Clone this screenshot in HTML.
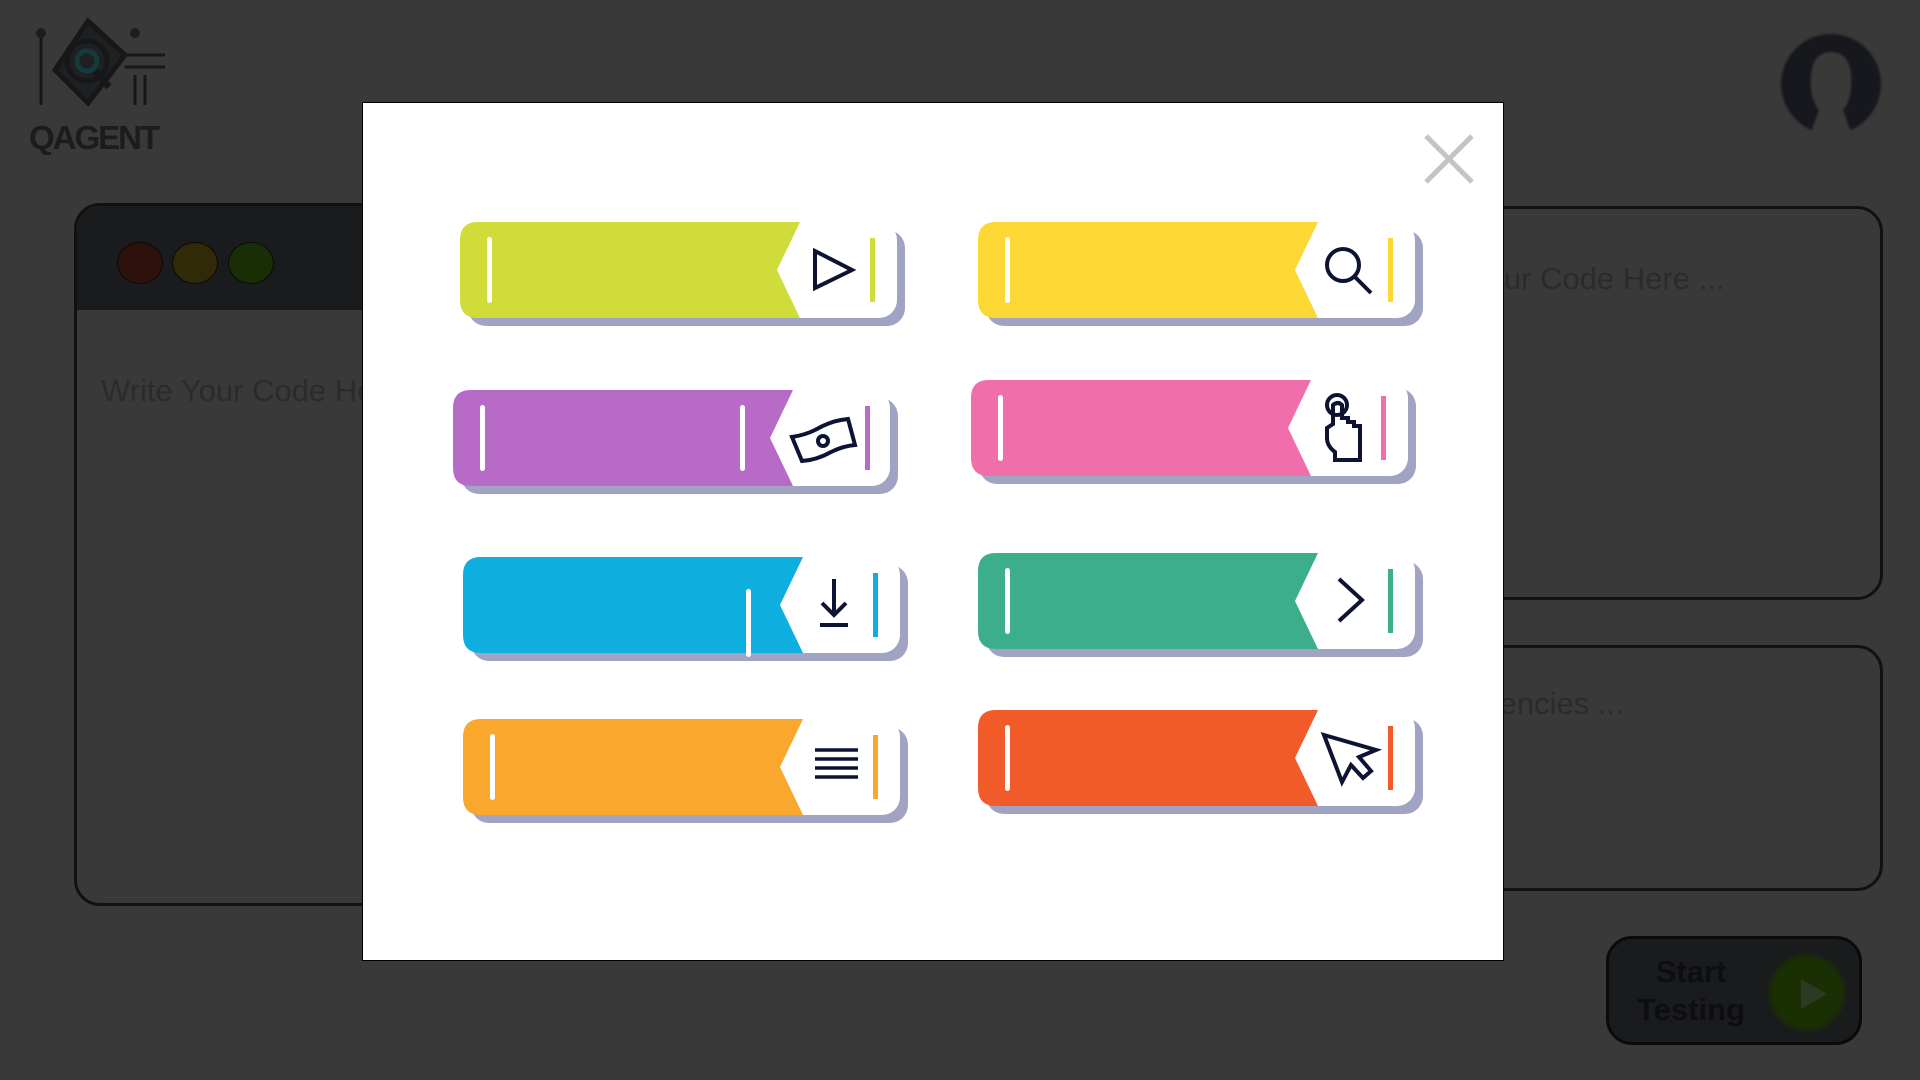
<!DOCTYPE html>
<html><head><meta charset="utf-8"><style>
*{margin:0;padding:0;box-sizing:border-box}
body{width:1920px;height:1080px;background:#393939;position:relative;overflow:hidden;font-family:"Liberation Sans",sans-serif}
.abs{position:absolute}
.panel{position:absolute;border:3px solid #111;border-radius:26px;background:#393939}
.dot{position:absolute;width:46px;height:42px;border-radius:50%;border:1.5px solid #0a0a0a;top:36px}
.ph{position:absolute;font-size:31px;color:#2b2b2b;white-space:nowrap}
.btn{position:absolute}
.ic{fill:none;stroke:#0d1333;stroke-width:4;stroke-linejoin:miter}
</style></head><body>
<!-- logo -->
<svg class="abs" style="left:25px;top:15px" width="145" height="140" viewBox="0 0 145 140">
<g fill="none" stroke="#151718" stroke-width="5">
<path d="M63 6 L100 40 L63 88 L30 55 Z" fill="#1e2022"/>
<circle cx="62" cy="46" r="20"/>
<circle cx="62" cy="46" r="10" stroke="#16393d"/>
<path d="M70 56 L84 72" stroke-width="7"/>
<path d="M100 40 H140 M100 52 H140" stroke-width="3"/>
<path d="M16 20 V90 M110 60 V90 M120 60 V90" stroke-width="3"/>
</g>
<circle cx="16" cy="18" r="5" fill="#1b1d1e"/><circle cx="110" cy="18" r="5" fill="#1b1d1e"/>
<text x="4" y="134" font-family="Liberation Sans" font-weight="bold" font-size="33" fill="#1a1c1d" letter-spacing="-2">QAGENT</text>
</svg>
<!-- avatar -->
<svg class="abs" style="left:1775px;top:30px;filter:blur(1px)" width="112" height="112" viewBox="0 0 112 112">
<circle cx="56" cy="54" r="50" fill="#16181d"/>
<path d="M36 102 L44 80 Q34 68 36 45 Q38 22 56 22 Q74 22 76 45 Q78 68 68 80 L76 102 Q56 112 36 102Z" fill="#393939"/>
</svg>
<!-- left panel -->
<div class="panel" style="left:74px;top:203px;width:840px;height:703px;overflow:hidden">
 <div class="abs" style="left:0;top:0;width:100%;height:104px;background:#1a1b1d"></div>
 <div class="dot" style="left:40px;background:#2e110d"></div>
 <div class="dot" style="left:95px;background:#302a09"></div>
 <div class="dot" style="left:151px;background:#1a2e06"></div>
 <div class="ph" style="left:24px;top:167px">Write Your Code Here ...</div>
</div>
<div class="panel" style="left:1300px;top:206px;width:583px;height:394px">
 <div class="ph" style="left:86px;top:52px">Write Your Code Here ...</div>
</div>
<div class="panel" style="left:1300px;top:645px;width:583px;height:246px">
 <div class="ph" style="left:88px;top:38px">Dependencies ...</div>
</div>
<!-- start -->
<div class="abs" style="left:1606px;top:936px;width:256px;height:109px;border:3px solid #0a0a0a;border-radius:26px;background:#1a1b1d">
 <div class="abs" style="left:12px;top:14px;width:140px;text-align:center;font-weight:bold;font-size:31px;line-height:38px;color:#0d0e0f">Start<br>Testing</div>
 <div class="abs" style="left:160px;top:16px;width:76px;height:76px;border-radius:50%;background:#1a2f04;filter:blur(2px)"></div>
 <div class="abs" style="left:192px;top:40px;width:0;height:0;border-left:26px solid #2c3a22;border-top:15px solid transparent;border-bottom:15px solid transparent"></div>
</div>
<!-- modal -->
<div class="abs" style="left:362px;top:102px;width:1142px;height:859px;background:#fff;border:1px solid #000">
 <svg class="abs" style="left:1058px;top:28px" width="56" height="56" viewBox="0 0 56 56"><path d="M5 5L51 51M51 5L5 51" stroke="#c4c4c4" stroke-width="5"/></svg>
</div>

<!-- buttons -->
<svg class="btn" style="left:460px;top:222px" width="446" height="105" viewBox="0 0 446 105">
<rect x="8" y="8" width="437" height="96" rx="18" fill="#a0a3c2"/><rect width="437" height="96" rx="18" fill="#fff"/>
<path d="M18 0H340L317 48L340 96H18Q0 96 0 78V18Q0 0 18 0Z" fill="#cfdc3a"/>
<rect x="27" y="15" width="5" height="66" rx="2.5" fill="#fff"/><rect x="410" y="16" width="5" height="64" fill="#cfdc3a"/>
<path class="ic" d="M355 29L392 48L355 66Z"/></svg>

<svg class="btn" style="left:978px;top:222px" width="446" height="105" viewBox="0 0 446 105">
<rect x="8" y="8" width="437" height="96" rx="18" fill="#a0a3c2"/><rect width="437" height="96" rx="18" fill="#fff"/>
<path d="M18 0H340L317 48L340 96H18Q0 96 0 78V18Q0 0 18 0Z" fill="#fdd835"/>
<rect x="27" y="15" width="5" height="66" rx="2.5" fill="#fff"/><rect x="410" y="16" width="5" height="64" fill="#fdd835"/>
<circle class="ic" cx="365" cy="43" r="16"/><path class="ic" d="M377 55L393 71"/></svg>

<svg class="btn" style="left:453px;top:390px" width="446" height="105" viewBox="0 0 446 105">
<rect x="8" y="8" width="437" height="96" rx="18" fill="#a0a3c2"/><rect width="437" height="96" rx="18" fill="#fff"/>
<path d="M18 0H340L317 48L340 96H18Q0 96 0 78V18Q0 0 18 0Z" fill="#b86ac7"/>
<rect x="27" y="15" width="5" height="66" rx="2.5" fill="#fff"/><rect x="287" y="15" width="5" height="66" rx="2.5" fill="#fff"/><rect x="412" y="16" width="5" height="64" fill="#b86ac7"/>
<path class="ic" d="M339 47Q352 45 362 40Q376 32 388 30L395 29L402 55Q390 56 378 62Q364 70 349 71Z"/><circle class="ic" cx="370" cy="51" r="5"/></svg>

<svg class="btn" style="left:971px;top:380px" width="446" height="105" viewBox="0 0 446 105">
<rect x="8" y="8" width="437" height="96" rx="18" fill="#a0a3c2"/><rect width="437" height="96" rx="18" fill="#fff"/>
<path d="M18 0H340L317 48L340 96H18Q0 96 0 78V18Q0 0 18 0Z" fill="#f06ea9"/>
<circle class="ic" cx="366" cy="25" r="10"/><path class="ic" d="M364 80V72Q356 66 356 58V48L362 44V25Q367 21 371 25V38H377V42H383V46H389V80Z"/>
<rect x="27" y="15" width="5" height="66" rx="2.5" fill="#fff"/><rect x="410" y="16" width="5" height="64" fill="#f06ea9"/></svg>

<svg class="btn" style="left:463px;top:557px" width="446" height="105" viewBox="0 0 446 105">
<rect x="8" y="8" width="437" height="96" rx="18" fill="#a0a3c2"/><rect width="437" height="96" rx="18" fill="#fff"/>
<path d="M18 0H340L317 48L340 96H18Q0 96 0 78V18Q0 0 18 0Z" fill="#0eaedf"/>
<rect x="283" y="32" width="5" height="68" rx="2.5" fill="#fff"/><rect x="410" y="16" width="5" height="64" fill="#0eaedf"/>
<path class="ic" d="M371 22V58M359 46L371 58L383 46M357 68H385"/></svg>

<svg class="btn" style="left:978px;top:553px" width="446" height="105" viewBox="0 0 446 105">
<rect x="8" y="8" width="437" height="96" rx="18" fill="#a0a3c2"/><rect width="437" height="96" rx="18" fill="#fff"/>
<path d="M18 0H340L317 48L340 96H18Q0 96 0 78V18Q0 0 18 0Z" fill="#3dae8c"/>
<rect x="27" y="15" width="5" height="66" rx="2.5" fill="#fff"/><rect x="410" y="16" width="5" height="64" fill="#3dae8c"/>
<path class="ic" d="M361 26L384 47L361 68"/></svg>

<svg class="btn" style="left:463px;top:719px" width="446" height="105" viewBox="0 0 446 105">
<rect x="8" y="8" width="437" height="96" rx="18" fill="#a0a3c2"/><rect width="437" height="96" rx="18" fill="#fff"/>
<path d="M18 0H340L317 48L340 96H18Q0 96 0 78V18Q0 0 18 0Z" fill="#f9a72d"/>
<rect x="27" y="15" width="5" height="66" rx="2.5" fill="#fff"/><rect x="410" y="16" width="5" height="64" fill="#f9a72d"/>
<path class="ic" style="stroke-width:3.5" d="M352 31H395M352 40H395M352 49H395M352 58H395"/></svg>

<svg class="btn" style="left:978px;top:710px" width="446" height="105" viewBox="0 0 446 105">
<rect x="8" y="8" width="437" height="96" rx="18" fill="#a0a3c2"/><rect width="437" height="96" rx="18" fill="#fff"/>
<path d="M18 0H340L317 48L340 96H18Q0 96 0 78V18Q0 0 18 0Z" fill="#f15a29"/>
<rect x="27" y="15" width="5" height="66" rx="2.5" fill="#fff"/><rect x="410" y="16" width="5" height="64" fill="#f15a29"/>
<path class="ic" d="M346 25L398 40L381 47L393 61L385 68L373 55L364 72Z"/></svg>
</body></html>
